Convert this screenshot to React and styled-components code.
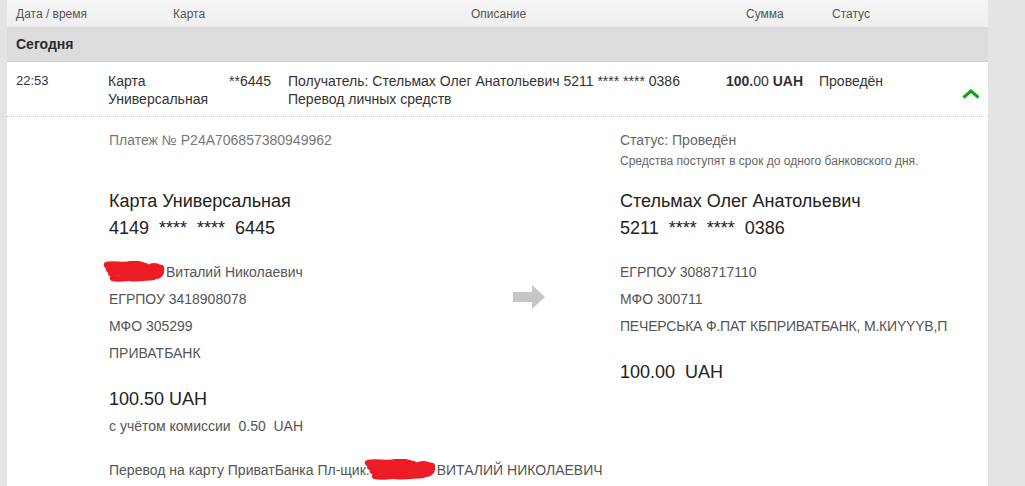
import React from 'react';
import styled, { createGlobalStyle } from 'styled-components';

const GlobalStyle = createGlobalStyle`
  html, body {
    margin: 0;
    padding: 0;
    background: #e4e4e4;
    font-family: 'Liberation Sans', Arial, sans-serif;
  }
`;

// hand-drawn red marker over hidden names
const Scribble = ({ width, height }) => (
  <ScribbleSvg width={width} height={height} viewBox="0 0 62 22" preserveAspectRatio="none">
    <g stroke="#ec1c24" strokeWidth="6.5" strokeLinecap="round" strokeLinejoin="round" fill="none">
      <path d="M4 4 C12 2, 20 6, 28 3 C34 2, 38 4, 42 5" />
      <path d="M6 8 C14 6, 24 10, 34 7 C42 5, 50 8, 58 7" />
      <path d="M8 12 C16 10, 26 14, 36 11 C44 9, 52 13, 57 11" />
      <path d="M10 17 C16 19, 22 16, 28 17 C36 18, 44 16, 50 16" />
      <path d="M46 7 C50 4, 56 5, 58 9 C58 14, 54 16, 50 14" />
    </g>
  </ScribbleSvg>
);

const Chevron = () => (
  <ChevronSvg width="18" height="10" viewBox="0 0 18 10">
    <path d="M1.5 8.5 L9 2 L16.5 8.5" stroke="#14a014" strokeWidth="3" fill="none" />
  </ChevronSvg>
);

const Arrow = () => (
  <svg width="33" height="24" viewBox="0 0 33 24">
    <path d="M0 7 H19 V0 L32 12 L19 24 V17 H0 Z" fill="#c6c6c6" />
  </svg>
);

const App = () => (
  <>
    <GlobalStyle />
    <Page>
      <Main>
        <HeaderRow>
          <HeadCell>Дата / время</HeadCell>
          <HeadCell>Карта</HeadCell>
          <HeadCell>Описание</HeadCell>
          <HeadCell>Сумма</HeadCell>
          <HeadCell>Статус</HeadCell>
        </HeaderRow>

        <DayBand>Сегодня</DayBand>

        <TxRow>
          <Time>22:53</Time>
          <Cell>
            Карта
            <br />
            Универсальная
          </Cell>
          <Cell>**6445</Cell>
          <Cell>
            Получатель: Стельмах Олег Анатольевич 5211 **** **** 0386
            <br />
            Перевод личных средств
          </Cell>
          <Cell>
            <b>100.</b>00 <b>UAH</b>
          </Cell>
          <StatusCell>
            Проведён
            <Chevron />
          </StatusCell>
        </TxRow>

        <Details>
          <Column>
            <PaymentNo>Платеж № P24A706857380949962</PaymentNo>
            <BigLine gap={39.5}>Карта Универсальная</BigLine>
            <BigLine>4149&nbsp; ****&nbsp; ****&nbsp; 6445</BigLine>
            <InfoLine gap={17}>
              <Scribble width={62} height={22} />
              Виталий Николаевич
            </InfoLine>
            <InfoLine>ЕГРПОУ 3418908078</InfoLine>
            <InfoLine>МФО 305299</InfoLine>
            <InfoLine>ПРИВАТБАНК</InfoLine>
            <BigLine gap={19}>100.50 UAH</BigLine>
            <InfoLine short>с учётом комиссии&nbsp; 0.50&nbsp; UAH</InfoLine>
            <InfoLine gap={18}>
              Перевод на карту ПриватБанка Пл-щик:
              <Scribble width={72} height={22} />
              ВИТАЛИЙ НИКОЛАЕВИЧ
            </InfoLine>
          </Column>

          <ArrowCol>
            <Arrow />
          </ArrowCol>

          <Column>
            <StatusLine>Статус: Проведён</StatusLine>
            <Note>Средства поступят в срок до одного банковского дня.</Note>
            <BigLine gap={19.5}>Стельмах Олег Анатольевич</BigLine>
            <BigLine>5211&nbsp; ****&nbsp; ****&nbsp; 0386</BigLine>
            <InfoLine gap={17}>ЕГРПОУ 3088717110</InfoLine>
            <InfoLine>МФО 300711</InfoLine>
            <InfoLine tight>ПЕЧЕРСЬКА Ф.ПАТ КБПРИВАТБАНК, М.КИYYYВ,П</InfoLine>
            <BigLine gap={19}>100.00&nbsp; UAH</BigLine>
          </Column>
        </Details>
      </Main>
    </Page>
  </>
);

const Page = styled.div`
  min-height: 486px;
  padding-left: 7px;
  display: flex;
`;

const Main = styled.div`
  width: 981px;
  min-height: 486px;
  background: #ffffff;
  color: #333;
`;

const HeaderRow = styled.div`
  height: 27px;
  padding-left: 9px;
  display: grid;
  grid-template-columns: 157px 298px 275px 86px 1fr;
  align-items: center;
  background: linear-gradient(#f5f5f5, #efefef);
`;

const HeadCell = styled.div`
  font-size: 12px;
  color: #555;
`;

const DayBand = styled.div`
  height: 35px;
  padding-left: 9px;
  display: flex;
  align-items: center;
  background: #dcdcdc;
  font-size: 14px;
  font-weight: bold;
  color: #2a2a2a;
  border-bottom: 1px dotted #c8c8c8;
  box-sizing: border-box;
`;

const TxRow = styled.div`
  height: 55px;
  box-sizing: border-box;
  padding: 10px 9px 0 9px;
  display: grid;
  grid-template-columns: 92px 121px 59px 438px 93px 1fr;
  border-bottom: 1px dotted #cfcfcf;
`;

const Cell = styled.div`
  font-size: 14px;
  line-height: 18px;
  color: #333;

  b {
    font-weight: bold;
  }
`;

const Time = styled(Cell)`
  font-size: 13px;
`;

const StatusCell = styled(Cell)`
  position: relative;
`;

const ChevronSvg = styled.svg`
  position: absolute;
  right: -1px;
  top: 17px;
`;

const Details = styled.div`
  padding: 15px 0 0 102px;
  display: grid;
  grid-template-columns: 404px 107px 1fr;
`;

const Column = styled.div`
  display: flex;
  flex-direction: column;
  white-space: nowrap;
`;

const ArrowCol = styled.div`
  padding-top: 153px;
`;

const PaymentNo = styled.div`
  font-size: 14px;
  line-height: 16px;
  color: #777;
`;

const StatusLine = styled.div`
  font-size: 14px;
  line-height: 16px;
  color: #666;
`;

const Note = styled.div`
  margin-top: 6px;
  font-size: 12px;
  line-height: 14px;
  color: #666;
`;

const BigLine = styled.div`
  margin-top: ${({ gap }) => gap || 0}px;
  font-size: 18px;
  line-height: 27px;
  color: #222;
`;

const InfoLine = styled.div`
  margin-top: ${({ gap }) => gap || 0}px;
  font-size: 14px;
  line-height: ${({ short }) => (short ? 26 : 27)}px;
  letter-spacing: ${({ tight }) => (tight ? '-0.2px' : 'normal')};
  color: #555;
  display: flex;
  align-items: center;
`;

const ScribbleSvg = styled.svg`
  flex-shrink: 0;
  margin: 0 1px 0 -6px;
`;

export default App;
